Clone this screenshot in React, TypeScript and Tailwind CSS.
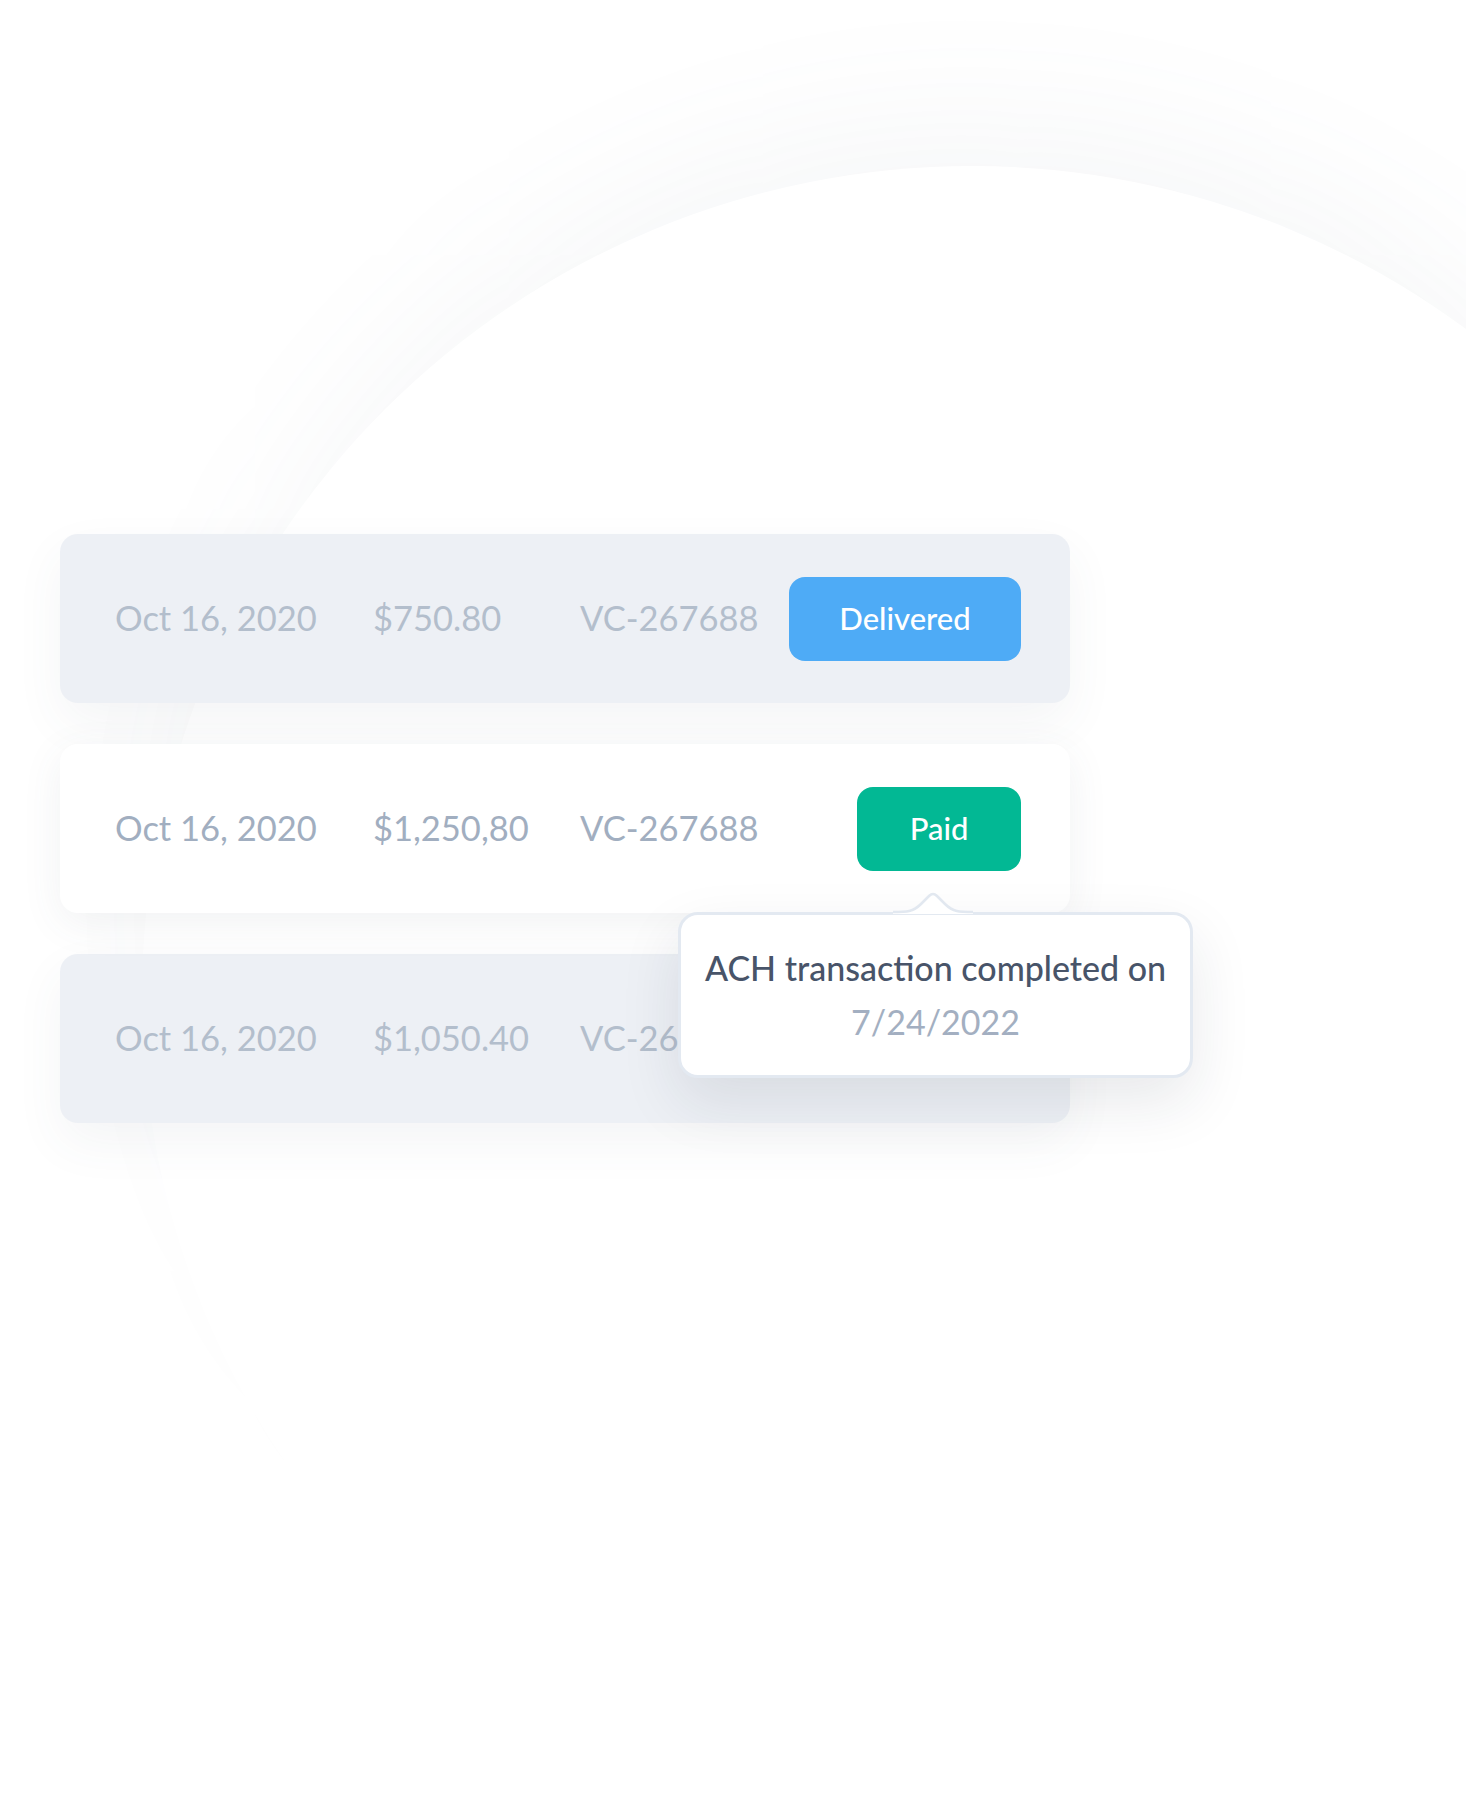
import React from "react";

type Row = {
	date: string;
	amount: string;
	id: string;
	status?: "Delivered" | "Paid";
	active?: boolean;
};

const rows: Row[] = [
	{ date: "Oct 16, 2020", amount: "$750.80", id: "VC-267688", status: "Delivered" },
	{ date: "Oct 16, 2020", amount: "$1,250,80", id: "VC-267688", status: "Paid", active: true },
	{ date: "Oct 16, 2020", amount: "$1,050.40", id: "VC-267688" },
];

// Tooltip shown under the "Paid" badge of the active row
const Tooltip = () => (
	<div className="absolute left-[618px] top-[168px] z-20 w-[515px]">
		{/* little arrow on top */}
		<svg
			className="absolute left-[215px] top-[-21px]"
			width="80"
			height="23"
			viewBox="0 0 80 23"
			fill="none"
		>
			<path
				d="M0 21 C14 21 20 21 28 13 L36 5 Q40 1 44 5 L52 13 C60 21 66 21 80 21 L80 23 L0 23 Z"
				fill="#ffffff"
			/>
			<path
				d="M0 21 C14 21 20 21 28 13 L36 5 Q40 1 44 5 L52 13 C60 21 66 21 80 21"
				stroke="#e2e8f0"
				strokeWidth="2.5"
			/>
		</svg>
		<div className="flex h-[166px] flex-col items-center justify-center rounded-[20px] border-[3px] border-[#e3e9f1] bg-white shadow-[0_24px_60px_rgba(30,41,59,0.10)]">
			<p className="text-[34px] leading-[54px] font-medium text-[#485469]">
				ACH transaction completed on
			</p>
			<p className="text-[34px] leading-[54px] text-[#a3afc1]">7/24/2022</p>
		</div>
	</div>
);

const StatusBadge = ({ status }: { status?: Row["status"] }) => {
	if (status === "Delivered") {
		return (
			<div className="ml-auto flex h-[84px] w-[232px] items-center justify-center rounded-[16px] bg-[#4eabf6] text-[31px] font-medium text-white">
				Delivered
			</div>
		);
	}
	if (status === "Paid") {
		return (
			<div className="ml-auto flex h-[84px] w-[164px] items-center justify-center rounded-[16px] bg-[#02b894] text-[31px] font-medium text-white">
				Paid
			</div>
		);
	}
	return null;
};

const App = () => {
	return (
		<div
			className="relative h-[1818px] w-full overflow-hidden bg-white"
			style={{ fontFamily: "Lato, 'Open Sans', sans-serif" }}
		>
			{/* big faint circle in the background */}
			<div className="absolute left-[142px] top-[166px] h-[1660px] w-[1660px] rounded-full bg-white shadow-[0_-90px_150px_-50px_rgba(100,116,139,0.06)]"></div>

			<div className="relative flex flex-col gap-[41px] pt-[534px] pl-[60px]">
				{rows.map((row, i) => (
					<div
						key={i}
						className={`relative flex h-[169px] w-[1010px] items-center rounded-[18px] pl-[55px] pr-[49px] ${
							row.active
								? "z-10 bg-white text-[#a1aec0] shadow-[0_10px_40px_rgba(71,85,105,0.08)]"
								: "bg-[#edf0f5] text-[#b3becc] shadow-[0_20px_50px_rgba(71,85,105,0.06)]"
						}`}
					>
						<span className="w-[258px] text-[34.5px] leading-none">{row.date}</span>
						<span className="w-[207px] text-[34.5px] leading-none">{row.amount}</span>
						<span className="text-[34.5px] leading-none">{row.id}</span>
						<StatusBadge status={row.status} />
						{row.active && <Tooltip />}
					</div>
				))}
			</div>
		</div>
	);
};

export default App;
